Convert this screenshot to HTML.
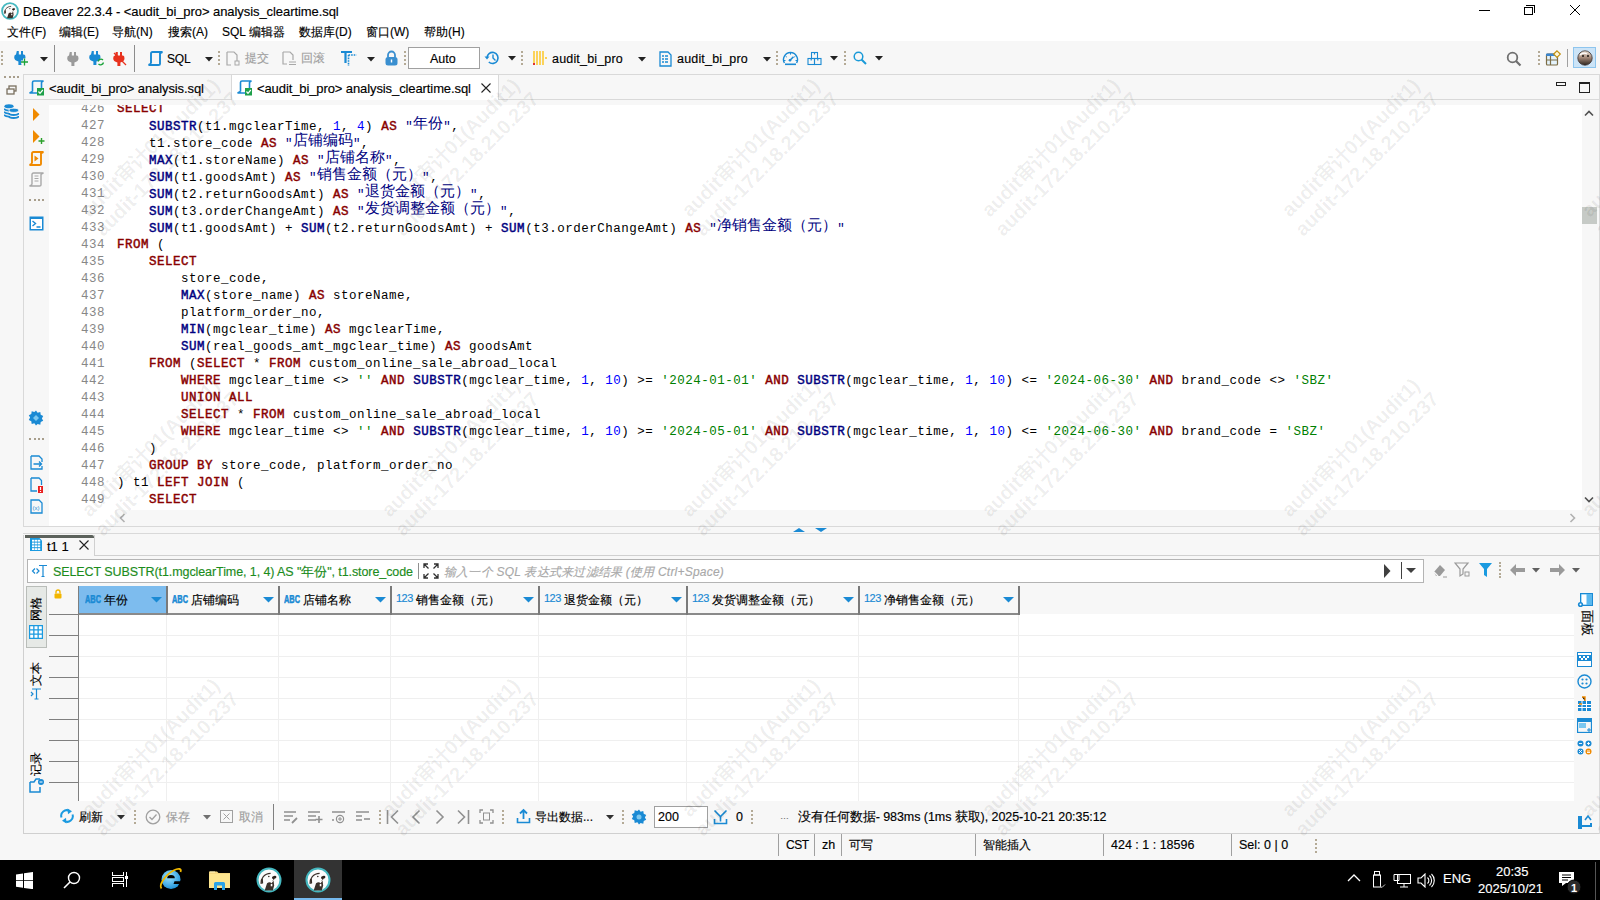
<!DOCTYPE html>
<html><head><meta charset="utf-8">
<style>
*{box-sizing:border-box;margin:0;padding:0}
html,body{width:1600px;height:900px;overflow:hidden;background:#f7f7f7;font-family:"Liberation Sans",sans-serif;font-size:12px;color:#000}
.a{position:absolute}
.t{position:absolute;white-space:nowrap;line-height:1;-webkit-text-stroke:0.15px currentColor}
#code{position:absolute;left:49px;top:105px;width:1533px;height:405px;background:#fff;overflow:hidden}
.ln{position:absolute;left:32px;width:24px;height:17px;line-height:18px;font-family:"Liberation Mono",monospace;font-size:12.5px;letter-spacing:0.5px;color:#878787;text-align:right;white-space:pre}
.cl{position:absolute;left:68px;height:17px;line-height:18px;font-family:"Liberation Mono",monospace;font-size:12.5px;letter-spacing:0.5px;color:#000;white-space:pre}
.k{color:#880000;font-weight:normal;-webkit-text-stroke:0.45px currentColor}
.f{color:#000080;font-weight:normal;-webkit-text-stroke:0.45px currentColor}
.n{color:#0000ff}
.s{color:#008000}
.q{color:#000080}
i.c{font-style:normal;display:inline-block;width:15px;font-size:14.5px;letter-spacing:0;position:relative;top:-2.5px}
.sep{position:absolute;width:1px;background:#8c8c8c}
.grip{position:absolute;width:2px;border-left:2px dotted #b4aa96}
.dd{position:absolute;width:0;height:0;border-left:5px solid transparent;border-right:5px solid transparent;border-top:5px solid #222}
.wm{position:absolute;width:300px;text-align:center;transform:rotate(-45deg);color:rgba(0,0,0,0.07);font-size:20px;font-weight:bold;line-height:23px;white-space:nowrap}
</style></head><body>
<!-- title bar -->
<div class="a" style="left:0;top:0;width:1600px;height:21px;background:#fff"></div>
<svg class="a" style="left:1px;top:2px" width="18" height="18" viewBox="0 0 24 24"><circle cx="12" cy="12" r="10.6" fill="#fbfbfb" stroke="#45b8c0" stroke-width="2.4"/><path d="M4.6 15.5C4.4 10.5 7.5 6 13.5 5.8" stroke="#3a302a" stroke-width="1.1" fill="none"/><path d="M4.8 11.5l1.5-1 .3 4.5-1.6.8z" fill="#3a302a"/><ellipse cx="16.8" cy="9.6" rx="2.1" ry="1.3" fill="#2a201a" transform="rotate(-15 16.8 9.6)"/><circle cx="11.8" cy="8.8" r=".75" fill="#3a302a"/><path d="M8 21.8L10.2 15q2.5-2 4.2 0l1.8-2.5.6 4.5-1.3 4.8z" fill="#3a302a"/><path d="M13.6 15.6h1.5v2.2h-1.5z" fill="#fff"/><path d="M15.5 12.5l1.3-1.5" stroke="#3a302a" stroke-width=".8"/></svg>
<div class="t" style="left:23px;top:5px;font-size:13px;letter-spacing:-0.07px">DBeaver 22.3.4 - &lt;audit_bi_pro&gt; analysis_cleartime.sql</div>
<div class="a" style="left:1479px;top:10px;width:11px;height:1px;background:#000"></div>
<div class="a" style="left:1524px;top:7px;width:9px;height:8px;border:1px solid #000"></div>
<div class="a" style="left:1526px;top:5px;width:9px;height:8px;border-top:1px solid #000;border-right:1px solid #000"></div>
<svg class="a" style="left:1570px;top:5px" width="10" height="10"><path d="M0 0L10 10M10 0L0 10" stroke="#000" stroke-width="1"/></svg>
<!-- menu -->
<div class="a" style="left:0;top:21px;width:1600px;height:20px;background:#fff"></div>
<div class="t" style="left:7px;top:26px">文件(F)</div>
<div class="t" style="left:59px;top:26px">编辑(E)</div>
<div class="t" style="left:112px;top:26px">导航(N)</div>
<div class="t" style="left:168px;top:26px">搜索(A)</div>
<div class="t" style="left:222px;top:26px">SQL 编辑器</div>
<div class="t" style="left:299px;top:26px">数据库(D)</div>
<div class="t" style="left:366px;top:26px">窗口(W)</div>
<div class="t" style="left:424px;top:26px">帮助(H)</div>
<!-- toolbar -->
<div class="a" style="left:0;top:41px;width:1600px;height:33px;background:#f7f7f7"></div>

<div class="grip" style="left:1px;top:51px;height:14px"></div>
<svg class="a" style="left:14px;top:51px" width="16" height="15" overflow="visible"><path d="M2.8 0h2v3.5h2.2V0h2v3.5h1Q11.5 3.5 11.5 6.3Q11.5 9.5 7.4 10.4V14H4.4V10.4Q0.2 9.5 0.2 6.3Q0.2 3.5 2 3.5z" fill="#1a8ad4"/><path d="M10.5 7.5v7M7 11h7" stroke="#f7f7f7" stroke-width="3"/><path d="M10.5 7.5v7M7 11h7" stroke="#1aa33a" stroke-width="1.3"/></svg>
<svg class="a" style="left:40px;top:57px" width="8" height="5"><path d="M0 0h8l-4 4.5z" fill="#222"/></svg>
<div class="sep" style="left:54px;top:45px;height:27px"></div>
<svg class="a" style="left:67px;top:52px" width="13" height="14"><path d="M2.8 0h2v3.5h2.2V0h2v3.5h1Q11.5 3.5 11.5 6.3Q11.5 9.5 7.4 10.4V14H4.4V10.4Q0.2 9.5 0.2 6.3Q0.2 3.5 2 3.5z" fill="#9a9a9a"/></svg>
<svg class="a" style="left:89px;top:51px" width="16" height="15"><path d="M2.8 0h2v3.5h2.2V0h2v3.5h1Q11.5 3.5 11.5 6.3Q11.5 9.5 7.4 10.4V14H4.4V10.4Q0.2 9.5 0.2 6.3Q0.2 3.5 2 3.5z" fill="#1a8ad4"/><path d="M9 10.5a3 3 0 0 1 5-1.5M14.5 11.5a3 3 0 0 1-5 1.5" stroke="#1aa33a" stroke-width="1.3" fill="none"/></svg>
<svg class="a" style="left:113px;top:52px" width="14" height="14"><path d="M2.8 0h2v3.5h2.2V0h2v3.5h1Q11.5 3.5 11.5 6.3Q11.5 9.5 7.4 10.4V14H4.4V10.4Q0.2 9.5 0.2 6.3Q0.2 3.5 2 3.5z" fill="#e8321e"/><path d="M1 1l12 12" stroke="#e8321e" stroke-width="1.3"/></svg>
<div class="sep" style="left:134px;top:45px;height:27px"></div>
<svg class="a" style="left:148px;top:51px" width="15" height="15"><path d="M3 12.5V2.5Q3 1 4.5 1H14.5Q13 1.5 12 2.5V13Q12 14 10.5 14H0.5Q2 13.5 3 12.5" stroke="#1a8ad4" stroke-width="1.9" fill="none"/></svg>
<div class="t" style="left:167px;top:53px;font-size:12px;letter-spacing:-0.2px">SQL</div>
<svg class="a" style="left:205px;top:57px" width="8" height="5"><path d="M0 0h8l-4 4.5z" fill="#222"/></svg>
<div class="grip" style="left:218px;top:51px;height:14px"></div>
<svg class="a" style="left:226px;top:51px" width="14" height="15"><path d="M1 1h7l3 3v6M5 14H1V1" stroke="#a8a8a8" stroke-width="1.2" fill="none"/><rect x="9" y="10" width="4" height="4" stroke="#a8a8a8" fill="none"/></svg>
<div class="t" style="left:245px;top:52px;font-size:12px;color:#a0a0a0">提交</div>
<svg class="a" style="left:282px;top:51px" width="15" height="15"><path d="M1 1h7l3 3v5M5 13H1V1" stroke="#a8a8a8" stroke-width="1.2" fill="none"/><path d="M7 11h7M7 13.5h7" stroke="#a8a8a8" stroke-width="1"/></svg>
<div class="t" style="left:301px;top:52px;font-size:12px;color:#a0a0a0">回滚</div>
<svg class="a" style="left:341px;top:51px" width="16" height="15"><path d="M0 1h11M4.5 1v11" stroke="#1a8ad4" stroke-width="2.2"/><path d="M7.5 4h8M7.5 4v11" stroke="#1a8ad4" stroke-width="1.6" stroke-dasharray="1.6 1"/></svg>
<svg class="a" style="left:367px;top:57px" width="8" height="5"><path d="M0 0h8l-4 4.5z" fill="#222"/></svg>
<svg class="a" style="left:385px;top:50px" width="13" height="16"><path d="M3 7.5V5a3.5 3.5 0 0 1 7 0v2.5" stroke="#3a8fd0" stroke-width="1.8" fill="none"/><rect x="0.5" y="7" width="12" height="8.5" rx="2.5" fill="#3a8fd0"/><rect x="5.8" y="9.5" width="1.4" height="3" fill="#fff"/></svg>
<div class="grip" style="left:404px;top:51px;height:14px"></div>
<div class="a" style="left:408px;top:47px;width:72px;height:22px;background:#fff;border:1px solid #a0a0a0"></div>
<div class="t" style="left:430px;top:53px;font-size:12.5px">Auto</div>
<svg class="a" style="left:484px;top:50px" width="17" height="16"><path d="M3 8a5.5 5.5 0 1 1 1.8 4" stroke="#1a8ad4" stroke-width="1.6" fill="none"/><path d="M0.5 6.5l2.5 3 2.5-3" fill="#1a8ad4"/><path d="M9 4.5v3.5l2.5 2.5" stroke="#1a8ad4" stroke-width="1.4" fill="none"/></svg>
<svg class="a" style="left:508px;top:56px" width="8" height="5"><path d="M0 0h8l-4 4.5z" fill="#222"/></svg>
<div class="grip" style="left:521px;top:51px;height:14px"></div>
<svg class="a" style="left:532px;top:51px" width="16" height="15"><path d="M2 0v14M5 0v14M8 0v14M11 0v14" stroke="#fcc419" stroke-width="1.4"/><circle cx="14" cy="7" r="1" fill="#fcc419"/><rect x="1" y="12" width="2" height="2" fill="#e03030"/></svg>
<div class="t" style="left:552px;top:53px;font-size:12.5px;letter-spacing:0.18px">audit_bi_pro</div>
<svg class="a" style="left:638px;top:57px" width="8" height="5"><path d="M0 0h8l-4 4.5z" fill="#222"/></svg>
<svg class="a" style="left:659px;top:51px" width="13" height="16"><path d="M1 1h8l3 3v11H1z" stroke="#1a8ad4" stroke-width="1.3" fill="none"/><path d="M3 5h2M6 5h3M3 8h2M6 8h3M3 11h2M6 11h3" stroke="#1a8ad4" stroke-width="1.4"/></svg>
<div class="t" style="left:677px;top:53px;font-size:12.5px;letter-spacing:0.18px">audit_bi_pro</div>
<svg class="a" style="left:763px;top:57px" width="8" height="5"><path d="M0 0h8l-4 4.5z" fill="#222"/></svg>
<div class="grip" style="left:776px;top:51px;height:14px"></div>
<svg class="a" style="left:782px;top:51px" width="18" height="15"><path d="M2.4 12A7 7 0 1 1 14.6 12" stroke="#1a8ad4" stroke-width="1.4" fill="none"/><path d="M3 13.3h11" stroke="#1a8ad4" stroke-width="1.6"/><path d="M8.5 2v1.6M3.6 5.2l1.2.9M13.4 5.2l-1.2.9M2 9.5h1.5M13.5 9.5H15" stroke="#1a8ad4" stroke-width="1"/><path d="M7.5 9.8l4-4" stroke="#1a8ad4" stroke-width="1.6"/><circle cx="8" cy="9.3" r="1.3" fill="#1a8ad4"/></svg>
<svg class="a" style="left:807px;top:51px" width="15" height="15"><rect x="4.5" y="1.5" width="6" height="6" stroke="#1a8ad4" fill="none" stroke-width="1.1"/><rect x="1" y="7.5" width="6.5" height="6" stroke="#1a8ad4" fill="none" stroke-width="1.1"/><rect x="7.5" y="7.5" width="6.5" height="6" stroke="#1a8ad4" fill="none" stroke-width="1.1"/><path d="M7.5 1.5v2M4.2 7.5v2M10.8 7.5v2" stroke="#1a8ad4" stroke-width="1.2"/></svg>
<svg class="a" style="left:830px;top:56px" width="8" height="5"><path d="M0 0h8l-4 4.5z" fill="#222"/></svg>
<div class="grip" style="left:844px;top:51px;height:14px"></div>
<svg class="a" style="left:852px;top:51px" width="15" height="15"><circle cx="6.5" cy="5.5" r="4.3" stroke="#1a9ad8" stroke-width="1.5" fill="none"/><path d="M9.5 8.5l4.5 4.5" stroke="#1a9ad8" stroke-width="2"/></svg>
<svg class="a" style="left:875px;top:56px" width="8" height="5"><path d="M0 0h8l-4 4.5z" fill="#222"/></svg>
<svg class="a" style="left:1506px;top:51px" width="16" height="16"><circle cx="6.5" cy="6.5" r="4.8" stroke="#707070" stroke-width="1.8" fill="none"/><path d="M10 10l4.5 4.5" stroke="#707070" stroke-width="2.2"/></svg>
<div class="grip" style="left:1538px;top:51px;height:14px"></div>
<svg class="a" style="left:1545px;top:50px" width="17" height="16"><rect x="1.5" y="4" width="11" height="11" rx="1" stroke="#7d6d45" stroke-width="1.2" fill="#e4f3fc"/><path d="M1.5 10h11M5.5 4v11" stroke="#7d6d45" stroke-width="1.2"/><rect x="1" y="3.5" width="12" height="2.5" rx="1" fill="#3a86d0"/><path d="M12 0.8l3.3 3.3-3.3 3.3-3.3-3.3z" fill="#fff8d8" stroke="#c09010" stroke-width="1.2"/></svg>
<div class="sep" style="left:1567px;top:49px;height:18px;background:#a0a0a0"></div>
<div class="a" style="left:1573px;top:47px;width:23px;height:21px;background:#cce4f7;border:1px solid #8ec5ee"></div>
<svg class="a" style="left:1577px;top:50px" width="16" height="16"><defs><linearGradient id="av" x1="0" y1="0" x2="0" y2="1"><stop offset="0" stop-color="#efe6da"/><stop offset=".45" stop-color="#a88e7e"/><stop offset="1" stop-color="#2e241e"/></linearGradient></defs><circle cx="8" cy="8" r="7.2" fill="url(#av)" stroke="#3a3030" stroke-width=".8"/><circle cx="6" cy="6" r="1" fill="#1a1410"/><circle cx="11" cy="6" r="1" fill="#1a1410"/><path d="M3 5c2-2 5-2 7-1" stroke="#fff" stroke-width="1.2" fill="none"/></svg>

<!-- tab bar -->
<div class="a" style="left:23px;top:74px;width:1577px;height:26px;background:#f7f7f7;border-top:1px solid #d9d9d9;border-left:1px solid #d9d9d9;border-bottom:1px solid #d9d9d9"></div>
<div class="a" style="left:231px;top:74px;width:268px;height:26px;background:#fff;border-left:1px solid #d9d9d9;border-right:1px solid #d9d9d9;border-top:1px solid #d9d9d9"></div>
<svg class="a" style="left:29px;top:80px" width="16" height="16"><path d="M3.5 11.5V2.5Q3.5 1 5 1H14.5Q13 1.5 12.5 2.5V12Q12.5 13 11 13H0.5Q2 12.5 3.5 11.5" stroke="#1a8ad4" stroke-width="1.6" fill="none"/><rect x="8" y="8" width="7" height="7.5" fill="#1ea04a"/><path d="M9.5 11.5l1.5 1.8 2.8-3.3" stroke="#fff" stroke-width="1.2" fill="none"/></svg>
<div class="t" style="left:49px;top:82px;font-size:13px;letter-spacing:-0.1px">&lt;audit_bi_pro&gt; analysis.sql</div>
<svg class="a" style="left:237px;top:80px" width="16" height="16"><path d="M3.5 11.5V2.5Q3.5 1 5 1H14.5Q13 1.5 12.5 2.5V12Q12.5 13 11 13H0.5Q2 12.5 3.5 11.5" stroke="#1a8ad4" stroke-width="1.6" fill="none"/><rect x="8" y="8" width="7" height="7.5" fill="#1ea04a"/><path d="M9.5 11.5l1.5 1.8 2.8-3.3" stroke="#fff" stroke-width="1.2" fill="none"/></svg>
<div class="t" style="left:257px;top:82px;font-size:13px;letter-spacing:-0.1px">&lt;audit_bi_pro&gt; analysis_cleartime.sql</div>
<div class="a" style="left:1556px;top:82px;width:10px;height:4px;border:1.5px solid #222"></div>
<div class="a" style="left:1579px;top:82px;width:11px;height:11px;border:1.3px solid #222;border-top-width:2.5px"></div>
<svg class="a" style="left:481px;top:83px" width="10" height="10"><path d="M0.5 0.5L9.5 9.5M9.5 0.5L0.5 9.5" stroke="#222" stroke-width="1.1"/></svg>
<!-- editor -->
<div class="a" style="left:23px;top:100px;width:1577px;height:427px;background:#f7f7f7;border-left:1px solid #d9d9d9"></div>
<div class="a" style="left:0;top:74px;width:23px;height:786px;background:#f7f7f7"></div>
<div class="a" style="left:4px;top:76px;width:15px;border-top:2px dotted #a89e8c"></div>
<svg class="a" style="left:6px;top:85px" width="11" height="10"><rect x="3" y="1" width="7" height="5" stroke="#7a7060" fill="none" stroke-width="1.3"/><rect x="1" y="4" width="7" height="5" stroke="#7a7060" fill="#f7f7f7" stroke-width="1.3"/></svg>
<svg class="a" style="left:4px;top:104px" width="15" height="15"><ellipse cx="5" cy="2.2" rx="4.6" ry="2" fill="#1a8ad4"/><path d="M0.4 4.6c0 1.1 2 2 4.6 2M0.4 7.6c0 1.1 2 2 4.6 2M0.4 10.6c0 1.1 2 2 4.6 2" stroke="#1a8ad4" stroke-width="1.8" fill="none"/><ellipse cx="9.8" cy="6.3" rx="4.8" ry="2.1" fill="#1a8ad4" stroke="#f7f7f7" stroke-width=".8"/><path d="M5 9c0 1.1 2.1 2 4.8 2s4.8-.9 4.8-2M5 12c0 1.1 2.1 2 4.8 2s4.8-.9 4.8-2" stroke="#1a8ad4" stroke-width="1.8" fill="none"/></svg>
<!-- editor gutter icons -->
<svg class="a" style="left:33px;top:108px" width="7" height="13"><path d="M0 0L6.5 6.5L0 13z" fill="#f08a00"/></svg>
<svg class="a" style="left:33px;top:130px" width="12" height="14"><path d="M0 0L6.5 6.5L0 13z" fill="#f08a00"/><path d="M8.5 8v6M5.5 11h6" stroke="#2aa02a" stroke-width="1.4"/></svg>
<svg class="a" style="left:29px;top:151px" width="15" height="15"><path d="M3 12.5V2.5Q3 1 4.5 1H14.5Q13 1.5 12 2.5V13Q12 14 10.5 14H0.5Q2 13.5 3 12.5" stroke="#f08a00" stroke-width="1.9" fill="none"/><path d="M5.5 4.5l4 3-4 3z" fill="#f08a00"/></svg>
<svg class="a" style="left:29px;top:172px" width="15" height="15"><path d="M3 12.5V2.5Q3 1 4.5 1H14.5Q13 1.5 12 2.5V13Q12 14 10.5 14H0.5Q2 13.5 3 12.5" stroke="#a8a8a8" stroke-width="1.4" fill="none"/><path d="M5.5 4h4M5.5 6.5h4M5.5 9h4" stroke="#a8a8a8" stroke-width="1"/></svg>
<div class="a" style="left:29px;top:199px;width:15px;border-top:2px dotted #a89e8c"></div>
<svg class="a" style="left:29px;top:216px" width="15" height="15"><rect x="0.5" y="0.5" width="14" height="14" fill="#1a8ad4"/><rect x="2" y="3" width="11" height="10" fill="#fff"/><path d="M3.5 5l3 2.5-3 2.5M7.5 11h4" stroke="#1a8ad4" stroke-width="1.4" fill="none"/></svg>
<svg class="a" style="left:28px;top:410px" width="16" height="16"><path d="M8 0.5l1.6 2.2 2.7-.6.4 2.7 2.5 1.2-1.3 2.4 1.3 2.4-2.5 1.2-.4 2.7-2.7-.6L8 15.5l-1.6-2.2-2.7.6-.4-2.7-2.5-1.2L2.1 7.6.8 5.2l2.5-1.2.4-2.7 2.7.6z" fill="#1a8ad4"/><path d="M8 5l3 3-3 3-3-3z" fill="#7cc8f0"/></svg>
<div class="a" style="left:29px;top:438px;width:15px;border-top:2px dotted #a89e8c"></div>
<svg class="a" style="left:30px;top:455px" width="13" height="15"><path d="M1 1h8l3 3v3M12 11v3H1V1" stroke="#1a8ad4" stroke-width="1.3" fill="none"/><path d="M3.5 9h8M9 6.5l2.5 2.5L9 11.5" stroke="#1a8ad4" stroke-width="1.3" fill="none"/></svg>
<svg class="a" style="left:30px;top:477px" width="13" height="16"><path d="M1 1h8l2.5 2.5V8M7 14H1V1" stroke="#1a8ad4" stroke-width="1.3" fill="none"/><rect x="8" y="9" width="5" height="7" fill="#e82020"/><path d="M10.5 10v3M10.5 14v1" stroke="#fff" stroke-width="1.2"/></svg>
<svg class="a" style="left:30px;top:499px" width="13" height="15"><path d="M1 1h8l3 3v10H1z" stroke="#1a8ad4" stroke-width="1.3" fill="none"/><text x="2.5" y="11" font-size="6" fill="#1a8ad4" font-family="Liberation Sans">(x)</text></svg>

<div id="code">
<div class="ln" style="top:-5px">426</div><div class="cl" style="top:-5px"><b class="k">SELECT</b></div>
<div class="ln" style="top:12px">427</div><div class="cl" style="top:12px">    <b class="f">SUBSTR</b>(t1.mgclearTime, <span class="n">1</span>, <span class="n">4</span>) <b class="k">AS</b> <span class="q">&quot;<i class="c">年</i><i class="c">份</i>&quot;</span>,</div>
<div class="ln" style="top:29px">428</div><div class="cl" style="top:29px">    t1.store_code <b class="k">AS</b> <span class="q">&quot;<i class="c">店</i><i class="c">铺</i><i class="c">编</i><i class="c">码</i>&quot;</span>,</div>
<div class="ln" style="top:46px">429</div><div class="cl" style="top:46px">    <b class="f">MAX</b>(t1.storeName) <b class="k">AS</b> <span class="q">&quot;<i class="c">店</i><i class="c">铺</i><i class="c">名</i><i class="c">称</i>&quot;</span>,</div>
<div class="ln" style="top:63px">430</div><div class="cl" style="top:63px">    <b class="f">SUM</b>(t1.goodsAmt) <b class="k">AS</b> <span class="q">&quot;<i class="c">销</i><i class="c">售</i><i class="c">金</i><i class="c">额</i><i class="c">（</i><i class="c">元</i><i class="c">）</i>&quot;</span>,</div>
<div class="ln" style="top:80px">431</div><div class="cl" style="top:80px">    <b class="f">SUM</b>(t2.returnGoodsAmt) <b class="k">AS</b> <span class="q">&quot;<i class="c">退</i><i class="c">货</i><i class="c">金</i><i class="c">额</i><i class="c">（</i><i class="c">元</i><i class="c">）</i>&quot;</span>,</div>
<div class="ln" style="top:97px">432</div><div class="cl" style="top:97px">    <b class="f">SUM</b>(t3.orderChangeAmt) <b class="k">AS</b> <span class="q">&quot;<i class="c">发</i><i class="c">货</i><i class="c">调</i><i class="c">整</i><i class="c">金</i><i class="c">额</i><i class="c">（</i><i class="c">元</i><i class="c">）</i>&quot;</span>,</div>
<div class="ln" style="top:114px">433</div><div class="cl" style="top:114px">    <b class="f">SUM</b>(t1.goodsAmt) + <b class="f">SUM</b>(t2.returnGoodsAmt) + <b class="f">SUM</b>(t3.orderChangeAmt) <b class="k">AS</b> <span class="q">&quot;<i class="c">净</i><i class="c">销</i><i class="c">售</i><i class="c">金</i><i class="c">额</i><i class="c">（</i><i class="c">元</i><i class="c">）</i>&quot;</span></div>
<div class="ln" style="top:131px">434</div><div class="cl" style="top:131px"><b class="k">FROM</b> (</div>
<div class="ln" style="top:148px">435</div><div class="cl" style="top:148px">    <b class="k">SELECT</b></div>
<div class="ln" style="top:165px">436</div><div class="cl" style="top:165px">        store_code,</div>
<div class="ln" style="top:182px">437</div><div class="cl" style="top:182px">        <b class="f">MAX</b>(store_name) <b class="k">AS</b> storeName,</div>
<div class="ln" style="top:199px">438</div><div class="cl" style="top:199px">        platform_order_no,</div>
<div class="ln" style="top:216px">439</div><div class="cl" style="top:216px">        <b class="f">MIN</b>(mgclear_time) <b class="k">AS</b> mgclearTime,</div>
<div class="ln" style="top:233px">440</div><div class="cl" style="top:233px">        <b class="f">SUM</b>(real_goods_amt_mgclear_time) <b class="k">AS</b> goodsAmt</div>
<div class="ln" style="top:250px">441</div><div class="cl" style="top:250px">    <b class="k">FROM</b> (<b class="k">SELECT</b> * <b class="k">FROM</b> custom_online_sale_abroad_local</div>
<div class="ln" style="top:267px">442</div><div class="cl" style="top:267px">        <b class="k">WHERE</b> mgclear_time &lt;&gt; <span class="s">&#x27;&#x27;</span> <b class="k">AND</b> <b class="f">SUBSTR</b>(mgclear_time, <span class="n">1</span>, <span class="n">10</span>) &gt;= <span class="s">&#x27;2024-01-01&#x27;</span> <b class="k">AND</b> <b class="f">SUBSTR</b>(mgclear_time, <span class="n">1</span>, <span class="n">10</span>) &lt;= <span class="s">&#x27;2024-06-30&#x27;</span> <b class="k">AND</b> brand_code &lt;&gt; <span class="s">&#x27;SBZ&#x27;</span></div>
<div class="ln" style="top:284px">443</div><div class="cl" style="top:284px">        <b class="k">UNION</b> <b class="k">ALL</b></div>
<div class="ln" style="top:301px">444</div><div class="cl" style="top:301px">        <b class="k">SELECT</b> * <b class="k">FROM</b> custom_online_sale_abroad_local</div>
<div class="ln" style="top:318px">445</div><div class="cl" style="top:318px">        <b class="k">WHERE</b> mgclear_time &lt;&gt; <span class="s">&#x27;&#x27;</span> <b class="k">AND</b> <b class="f">SUBSTR</b>(mgclear_time, <span class="n">1</span>, <span class="n">10</span>) &gt;= <span class="s">&#x27;2024-05-01&#x27;</span> <b class="k">AND</b> <b class="f">SUBSTR</b>(mgclear_time, <span class="n">1</span>, <span class="n">10</span>) &lt;= <span class="s">&#x27;2024-06-30&#x27;</span> <b class="k">AND</b> brand_code = <span class="s">&#x27;SBZ&#x27;</span></div>
<div class="ln" style="top:335px">446</div><div class="cl" style="top:335px">    )</div>
<div class="ln" style="top:352px">447</div><div class="cl" style="top:352px">    <b class="k">GROUP</b> <b class="k">BY</b> store_code, platform_order_no</div>
<div class="ln" style="top:369px">448</div><div class="cl" style="top:369px">) t1 <b class="k">LEFT</b> <b class="k">JOIN</b> (</div>
<div class="ln" style="top:386px">449</div><div class="cl" style="top:386px">    <b class="k">SELECT</b></div>

</div>
<!-- scrollbars -->
<div class="a" style="left:49px;top:510px;width:66px;height:16px;background:#fff"></div>
<div class="a" style="left:1582px;top:207px;width:15px;height:17px;background:#c6cac6"></div>
<!-- splitter / results -->
<div class="a" style="left:23px;top:526px;width:1577px;height:1px;background:#d9d9d9"></div>
<div class="a" style="left:23px;top:533px;width:1577px;height:1px;background:#d9d9d9"></div>
<!-- editor h scrollbar & v scrollbar arrows -->
<svg class="a" style="left:1584px;top:110px" width="10" height="7"><path d="M1 5.5l4-4 4 4" stroke="#505050" stroke-width="1.6" fill="none"/></svg>
<svg class="a" style="left:1584px;top:496px" width="10" height="7"><path d="M1 1.5l4 4 4-4" stroke="#505050" stroke-width="1.6" fill="none"/></svg>
<svg class="a" style="left:119px;top:513px" width="7" height="10"><path d="M5.5 1l-4 4 4 4" stroke="#b0b0b0" stroke-width="1.6" fill="none"/></svg>
<svg class="a" style="left:1569px;top:513px" width="7" height="10"><path d="M1.5 1l4 4-4 4" stroke="#b0b0b0" stroke-width="1.6" fill="none"/></svg>
<svg class="a" style="left:793px;top:527px" width="36" height="6"><path d="M0 5l6-4 6 4z" fill="#1a8ad4"/><path d="M22 1h12l-6 4z" fill="#1a8ad4"/></svg>
<!-- results tab -->
<div class="a" style="left:95px;top:555px;width:1504px;height:1px;background:#d0d0d0"></div>
<div class="a" style="left:24px;top:535px;width:71px;height:21px;background:#f7f7f7;border-right:1px solid #d0d0d0"></div>
<div class="a" style="left:25px;top:535px;width:69px;height:3px;background:#5c625c;border-top-right-radius:2px"></div>
<svg class="a" style="left:30px;top:538px" width="12" height="13"><path d="M0 0h9.5l2.5 2.5V13H0z" fill="#1a9ae0"/><rect x="2" y="1.8" width="2.4" height="1.8" fill="#fff"/><rect x="2" y="4.6" width="2.4" height="1.8" fill="#fff"/><rect x="2" y="7.4" width="2.4" height="1.8" fill="#fff"/><rect x="2" y="10.2" width="2.4" height="1.8" fill="#fff"/><rect x="4.9" y="1.8" width="2.4" height="1.8" fill="#fff"/><rect x="4.9" y="4.6" width="2.4" height="1.8" fill="#fff"/><rect x="4.9" y="7.4" width="2.4" height="1.8" fill="#fff"/><rect x="4.9" y="10.2" width="2.4" height="1.8" fill="#fff"/><rect x="7.8" y="1.8" width="2.4" height="1.8" fill="#fff"/><rect x="7.8" y="4.6" width="2.4" height="1.8" fill="#fff"/><rect x="7.8" y="7.4" width="2.4" height="1.8" fill="#fff"/><rect x="7.8" y="10.2" width="2.4" height="1.8" fill="#fff"/></svg>
<div class="t" style="left:47px;top:540px;font-size:13px">t1 1</div>
<svg class="a" style="left:79px;top:540px" width="10" height="10"><path d="M0.5 0.5L9.5 9.5M9.5 0.5L0.5 9.5" stroke="#222" stroke-width="1.1"/></svg>
<!-- filter -->
<div class="a" style="left:27px;top:559px;width:1397px;height:24px;background:#fff;border:1px solid #b4b4b4"></div>
<svg class="a" style="left:31px;top:564px" width="16" height="14"><path d="M4 4.5l-2.5 2.5 2.5 2.5M5.5 4.5l2.5 2.5-2.5 2.5" stroke="#1a8ad4" stroke-width="1.2" fill="none"/><path d="M8 1.5h8M12 1.5v11M10.5 12.5h3" stroke="#1a8ad4" stroke-width="1.2"/></svg>
<div class="t" style="left:53px;top:566px;font-size:12.5px;color:#1c8c1c;letter-spacing:-0.085px">SELECT SUBSTR(t1.mgclearTime, 1, 4) AS "年份", t1.store_code</div>
<div class="a" style="left:418px;top:563px;width:1px;height:16px;background:#909090"></div>
<svg class="a" style="left:423px;top:563px" width="16" height="16"><path d="M1 5V1h4M11 1h4v4M15 11v4h-4M5 15H1v-4M1 1l4.5 4.5M15 1l-4.5 4.5M15 15l-4.5-4.5M1 15l4.5-4.5" stroke="#303030" stroke-width="1.3" fill="none"/></svg>
<div class="t" style="left:444px;top:566px;font-size:12px;color:#a8a8a8;font-style:italic;letter-spacing:0.22px">输入一个 SQL 表达式来过滤结果 (使用 Ctrl+Space)</div>
<svg class="a" style="left:1383px;top:564px" width="8" height="14"><path d="M1 0l6.5 7L1 14z" fill="#404040"/></svg>
<div class="a" style="left:1401px;top:562px;width:1px;height:17px;background:#404040"></div>
<svg class="a" style="left:1406px;top:568px" width="10" height="6"><path d="M0 0h10l-5 5z" fill="#404040"/></svg>
<svg class="a" style="left:1432px;top:562px" width="16" height="16"><path d="M2 10l6-7 5 5-5 6H4z" fill="#9a9a9a"/><path d="M2 10l4 4" stroke="#f7f7f7" stroke-width="1.2"/><path d="M11 15h4" stroke="#9a9a9a"/></svg>
<svg class="a" style="left:1454px;top:562px" width="16" height="16"><path d="M1 1h13l-5 6v5l-3 2V7z" stroke="#9a9a9a" stroke-width="1.2" fill="none"/><rect x="11" y="10" width="4" height="4" stroke="#9a9a9a" fill="none"/></svg>
<svg class="a" style="left:1478px;top:562px" width="15" height="16"><path d="M1 1h13l-5 6v8l-3-2V7z" fill="#1a9ae0"/></svg>
<div class="grip" style="left:1499px;top:562px;height:16px"></div>
<svg class="a" style="left:1509px;top:564px" width="17" height="12"><path d="M7 0L1 6l6 6V8h9V4H7z" fill="#9a9a9a"/></svg>
<svg class="a" style="left:1532px;top:568px" width="8" height="5"><path d="M0 0h8l-4 4.5z" fill="#606060"/></svg>
<svg class="a" style="left:1549px;top:564px" width="17" height="12"><path d="M10 0l6 6-6 6V8H1V4h9z" fill="#9a9a9a"/></svg>
<svg class="a" style="left:1572px;top:568px" width="8" height="5"><path d="M0 0h8l-4 4.5z" fill="#606060"/></svg>
<!-- results left vertical tabs -->
<div class="a" style="left:23px;top:535px;width:1px;height:299px;background:#d0d0d0"></div>
<div class="a" style="left:26px;top:586px;width:21px;height:62px;background:#e6e9e6;border:1px solid #b9bdb9"></div>
<div class="t" style="left:28px;top:603px;width:20px;font-size:12px;transform:rotate(-90deg);transform-origin:10px 8px">网格</div>
<svg class="a" style="left:29px;top:625px" width="14" height="14"><rect x="0" y="0" width="14" height="14" fill="#1a9ae0"/><path d="M1.2 1.2h3v3h-3zM5.5 1.2h3v3h-3zM9.8 1.2h3v3h-3zM1.2 5.5h3v3h-3zM5.5 5.5h3v3h-3zM9.8 5.5h3v3h-3zM1.2 9.8h3v3h-3zM5.5 9.8h3v3h-3zM9.8 9.8h3v3h-3z" fill="#fff"/></svg>
<div class="t" style="left:28px;top:668px;width:20px;font-size:12px;transform:rotate(-90deg);transform-origin:10px 8px">文本</div>
<svg class="a" style="left:30px;top:687px" width="12" height="14"><path d="M2 2h9M6.5 2v10M4.5 12h4" stroke="#1a8ad4" stroke-width="1.2"/><path d="M1 5l2 2-2 2" stroke="#1a8ad4" stroke-width="1.2" fill="none"/></svg>
<div class="t" style="left:28px;top:758px;width:20px;font-size:12px;transform:rotate(-90deg);transform-origin:10px 8px">记录</div>
<svg class="a" style="left:29px;top:777px" width="15" height="16"><path d="M1 5h4l2-3h4M11 10v5H1V5" stroke="#1a8ad4" stroke-width="1.5" fill="none"/><circle cx="12" cy="5" r="3" fill="#1a8ad4"/><path d="M10.5 5h3" stroke="#fff"/></svg>
<!-- grid -->
<div class="a" style="left:49px;top:586px;width:1525px;height:215px;background:#fff"></div>
<div class="a" style="left:49px;top:586px;width:30px;height:215px;background:#f7f7f7"></div>
<div class="a" style="left:79px;top:586px;width:1495px;height:28px;background:#f7f7f7"></div>
<svg class="a" style="left:54px;top:589px" width="8" height="10"><path d="M2 4.5V3a2 2 0 0 1 4 0v1.5" stroke="#f2b600" stroke-width="1.4" fill="none"/><rect x="0.5" y="4.5" width="7" height="5" rx="1" fill="#f2b600"/></svg>
<div class="a" style="left:79px;top:586px;width:88px;height:28px;background:#7dbcee"></div>
<div class="a" style="left:78px;top:586px;width:1px;height:215px;background:#7f7f7f"></div>
<div class="a" style="left:79px;top:613px;width:940px;height:2px;background:#8a8a8a"></div><div class="a" style="left:49px;top:614px;width:29px;height:1px;background:#7f7f7f"></div>
<div class="a" style="left:166px;top:586px;width:2px;height:29px;background:#7a7a7a"></div><div class="a" style="left:166px;top:615px;width:1px;height:186px;background:#efefef"></div><svg class="a" style="left:85px;top:595px" width="17" height="9"><text x="0" y="8" font-family="Liberation Sans" font-size="10" font-weight="bold" fill="#1a8ad4" stroke="#1a8ad4" stroke-width="0.5" textLength="16" lengthAdjust="spacingAndGlyphs">ABC</text></svg><div class="t" style="left:104px;top:594px;font-size:12px">年份</div><svg class="a" style="left:151px;top:597px" width="11" height="6"><path d="M0 0h11l-5.5 5.5z" fill="#1a8ad4"/></svg><div class="a" style="left:278px;top:586px;width:2px;height:29px;background:#7a7a7a"></div><div class="a" style="left:278px;top:615px;width:1px;height:186px;background:#efefef"></div><svg class="a" style="left:172px;top:595px" width="17" height="9"><text x="0" y="8" font-family="Liberation Sans" font-size="10" font-weight="bold" fill="#1a8ad4" stroke="#1a8ad4" stroke-width="0.5" textLength="16" lengthAdjust="spacingAndGlyphs">ABC</text></svg><div class="t" style="left:191px;top:594px;font-size:12px">店铺编码</div><svg class="a" style="left:263px;top:597px" width="11" height="6"><path d="M0 0h11l-5.5 5.5z" fill="#1a8ad4"/></svg><div class="a" style="left:390px;top:586px;width:2px;height:29px;background:#7a7a7a"></div><div class="a" style="left:390px;top:615px;width:1px;height:186px;background:#efefef"></div><svg class="a" style="left:284px;top:595px" width="17" height="9"><text x="0" y="8" font-family="Liberation Sans" font-size="10" font-weight="bold" fill="#1a8ad4" stroke="#1a8ad4" stroke-width="0.5" textLength="16" lengthAdjust="spacingAndGlyphs">ABC</text></svg><div class="t" style="left:303px;top:594px;font-size:12px">店铺名称</div><svg class="a" style="left:375px;top:597px" width="11" height="6"><path d="M0 0h11l-5.5 5.5z" fill="#1a8ad4"/></svg><div class="a" style="left:538px;top:586px;width:2px;height:29px;background:#7a7a7a"></div><div class="a" style="left:538px;top:615px;width:1px;height:186px;background:#efefef"></div><div class="t" style="left:396px;top:593px;font-size:11px;color:#1a8ad4;letter-spacing:-0.5px">123</div><div class="t" style="left:416px;top:594px;font-size:12px">销售金额（元）</div><svg class="a" style="left:523px;top:597px" width="11" height="6"><path d="M0 0h11l-5.5 5.5z" fill="#1a8ad4"/></svg><div class="a" style="left:686px;top:586px;width:2px;height:29px;background:#7a7a7a"></div><div class="a" style="left:686px;top:615px;width:1px;height:186px;background:#efefef"></div><div class="t" style="left:544px;top:593px;font-size:11px;color:#1a8ad4;letter-spacing:-0.5px">123</div><div class="t" style="left:564px;top:594px;font-size:12px">退货金额（元）</div><svg class="a" style="left:671px;top:597px" width="11" height="6"><path d="M0 0h11l-5.5 5.5z" fill="#1a8ad4"/></svg><div class="a" style="left:858px;top:586px;width:2px;height:29px;background:#7a7a7a"></div><div class="a" style="left:858px;top:615px;width:1px;height:186px;background:#efefef"></div><div class="t" style="left:692px;top:593px;font-size:11px;color:#1a8ad4;letter-spacing:-0.5px">123</div><div class="t" style="left:712px;top:594px;font-size:12px">发货调整金额（元）</div><svg class="a" style="left:843px;top:597px" width="11" height="6"><path d="M0 0h11l-5.5 5.5z" fill="#1a8ad4"/></svg><div class="a" style="left:1018px;top:586px;width:2px;height:29px;background:#7a7a7a"></div><div class="a" style="left:1018px;top:615px;width:1px;height:186px;background:#efefef"></div><div class="t" style="left:864px;top:593px;font-size:11px;color:#1a8ad4;letter-spacing:-0.5px">123</div><div class="t" style="left:884px;top:594px;font-size:12px">净销售金额（元）</div><svg class="a" style="left:1003px;top:597px" width="11" height="6"><path d="M0 0h11l-5.5 5.5z" fill="#1a8ad4"/></svg><div class="a" style="left:49px;top:635px;width:29px;height:1px;background:#7f7f7f"></div><div class="a" style="left:79px;top:635px;width:1495px;height:1px;background:#efefef"></div><div class="a" style="left:49px;top:656px;width:29px;height:1px;background:#7f7f7f"></div><div class="a" style="left:79px;top:656px;width:1495px;height:1px;background:#efefef"></div><div class="a" style="left:49px;top:677px;width:29px;height:1px;background:#7f7f7f"></div><div class="a" style="left:79px;top:677px;width:1495px;height:1px;background:#efefef"></div><div class="a" style="left:49px;top:698px;width:29px;height:1px;background:#7f7f7f"></div><div class="a" style="left:79px;top:698px;width:1495px;height:1px;background:#efefef"></div><div class="a" style="left:49px;top:719px;width:29px;height:1px;background:#7f7f7f"></div><div class="a" style="left:79px;top:719px;width:1495px;height:1px;background:#efefef"></div><div class="a" style="left:49px;top:740px;width:29px;height:1px;background:#7f7f7f"></div><div class="a" style="left:79px;top:740px;width:1495px;height:1px;background:#efefef"></div><div class="a" style="left:49px;top:761px;width:29px;height:1px;background:#7f7f7f"></div><div class="a" style="left:79px;top:761px;width:1495px;height:1px;background:#efefef"></div><div class="a" style="left:49px;top:782px;width:29px;height:1px;background:#7f7f7f"></div><div class="a" style="left:79px;top:782px;width:1495px;height:1px;background:#efefef"></div>

<!-- status bar -->
<!-- results bottom toolbar -->
<svg class="a" style="left:59px;top:808px" width="16" height="16"><path d="M2.5 9.5A5.5 5.5 0 0 1 10.5 3" stroke="#1a9ae0" stroke-width="2" fill="none"/><path d="M8.5 0.5l4.5 2.8-4 3z" fill="#1a9ae0"/><path d="M13.5 6.5A5.5 5.5 0 0 1 5.5 13" stroke="#1a9ae0" stroke-width="2" fill="none"/><path d="M7.5 15.5L3 12.7l4-3z" fill="#1a9ae0"/></svg>
<div class="t" style="left:79px;top:811px;font-size:12px">刷新</div>
<svg class="a" style="left:117px;top:815px" width="8" height="5"><path d="M0 0h8l-4 4.5z" fill="#303030"/></svg>
<div class="grip" style="left:134px;top:810px;height:14px"></div>
<svg class="a" style="left:145px;top:809px" width="16" height="16"><circle cx="8" cy="8" r="6.8" stroke="#a0a0a0" stroke-width="1.3" fill="none"/><path d="M4.5 8l2.5 2.5 4.5-5" stroke="#a0a0a0" stroke-width="1.3" fill="none"/></svg>
<div class="t" style="left:166px;top:811px;font-size:12px;color:#a0a0a0">保存</div>
<svg class="a" style="left:203px;top:815px" width="8" height="5"><path d="M0 0h8l-4 4.5z" fill="#707070"/></svg>
<svg class="a" style="left:220px;top:810px" width="14" height="14"><rect x="0.5" y="0.5" width="12" height="12" stroke="#a0a0a0" fill="none"/><path d="M3.5 3.5l6 6M9.5 3.5l-6 6" stroke="#a0a0a0"/></svg>
<div class="t" style="left:239px;top:811px;font-size:12px;color:#a0a0a0">取消</div>
<div class="sep" style="left:273px;top:804px;height:26px;background:#808080"></div>
<svg class="a" style="left:283px;top:810px" width="16" height="14"><path d="M1 2h12M1 6h9M1 10h6" stroke="#909090" stroke-width="1.6"/><path d="M9 13l5-5" stroke="#909090" stroke-width="1.8"/></svg>
<svg class="a" style="left:307px;top:810px" width="16" height="14"><path d="M1 2h12M1 6h8M1 10h8" stroke="#909090" stroke-width="1.6"/><path d="M12 6v7M8.5 9.5h7" stroke="#909090" stroke-width="1.6"/></svg>
<svg class="a" style="left:331px;top:810px" width="16" height="14"><path d="M1 2h13M1 10h2" stroke="#909090" stroke-width="1.6"/><circle cx="9" cy="9" r="3.6" stroke="#909090" stroke-width="1.2" fill="none"/><path d="M9 7v4M7 9h4" stroke="#909090"/></svg>
<svg class="a" style="left:355px;top:810px" width="16" height="14"><path d="M1 2h13M1 6h6M1 10h6" stroke="#909090" stroke-width="1.6"/><path d="M9 9h6" stroke="#909090" stroke-width="1.6"/></svg>
<div class="grip" style="left:379px;top:810px;height:14px"></div>
<svg class="a" style="left:386px;top:809px" width="14" height="16"><path d="M1.5 1v14" stroke="#909090" stroke-width="1.6"/><path d="M12 1.5L5.5 8l6.5 6.5" stroke="#909090" stroke-width="1.6" fill="none"/></svg>
<svg class="a" style="left:411px;top:809px" width="10" height="16"><path d="M8.5 1.5L2 8l6.5 6.5" stroke="#909090" stroke-width="1.6" fill="none"/></svg>
<svg class="a" style="left:435px;top:809px" width="10" height="16"><path d="M1.5 1.5L8 8l-6.5 6.5" stroke="#909090" stroke-width="1.6" fill="none"/></svg>
<svg class="a" style="left:456px;top:809px" width="14" height="16"><path d="M12.5 1v14" stroke="#909090" stroke-width="1.6"/><path d="M2 1.5L8.5 8 2 14.5" stroke="#909090" stroke-width="1.6" fill="none"/></svg>
<svg class="a" style="left:479px;top:809px" width="15" height="15"><path d="M1 4V1h3M11 1h3v3M14 11v3h-3M4 14H1v-3" stroke="#909090" stroke-width="1.3" fill="none"/><rect x="4.5" y="4" width="6" height="7" stroke="#909090" fill="none"/></svg>
<div class="grip" style="left:502px;top:810px;height:14px"></div>
<svg class="a" style="left:516px;top:808px" width="15" height="16"><path d="M7.5 2v9M4 5.5l3.5-3.5 3.5 3.5" stroke="#1a8ad4" stroke-width="1.8" fill="none"/><path d="M1.5 10v4.5h12V10" stroke="#1a8ad4" stroke-width="1.6" fill="none"/></svg>
<div class="t" style="left:535px;top:811px;font-size:12px">导出数据...</div>
<svg class="a" style="left:606px;top:815px" width="8" height="5"><path d="M0 0h8l-4 4.5z" fill="#303030"/></svg>
<div class="grip" style="left:622px;top:810px;height:14px"></div>
<svg class="a" style="left:631px;top:809px" width="16" height="16"><path d="M8 0.5l1.6 2.2 2.7-.6.4 2.7 2.5 1.2-1.3 2.4 1.3 2.4-2.5 1.2-.4 2.7-2.7-.6L8 15.5l-1.6-2.2-2.7.6-.4-2.7-2.5-1.2L2.1 7.6.8 5.2l2.5-1.2.4-2.7 2.7.6z" fill="#1a8ad4"/><circle cx="8" cy="8" r="2.5" fill="#7cc8f0"/></svg>
<div class="a" style="left:654px;top:806px;width:54px;height:22px;background:#fff;border:1px solid #a0a0a0"></div>
<div class="t" style="left:658px;top:811px;font-size:12.5px">200</div>
<svg class="a" style="left:713px;top:809px" width="16" height="16"><path d="M1.5 1.5l6 6 6-6M7.5 7.5v5" stroke="#1a8ad4" stroke-width="1.6" fill="none"/><path d="M1.5 10v4.5h12V10" stroke="#1a8ad4" stroke-width="1.6" fill="none"/></svg>
<div class="t" style="left:736px;top:811px;font-size:12.5px">0</div>
<div class="grip" style="left:751px;top:810px;height:14px"></div>
<div class="t" style="left:780px;top:812px;font-size:9px;color:#707070">…</div>
<div class="t" style="left:798px;top:811px;font-size:12.5px;letter-spacing:-0.06px">没有任何数据- 983ms (1ms 获取), 2025-10-21 20:35:12</div>
<!-- right side strip of results -->
<svg class="a" style="left:1577px;top:593px" width="16" height="16"><rect x="3.5" y="0.5" width="12" height="12" stroke="#1a8ad4" fill="#5ab8ee"/><rect x="4.5" y="1.5" width="5" height="10" fill="#fff"/><path d="M3.5 9.5l2 2-2 2-2-2z" fill="#1a8ad4"/><circle cx="3.5" cy="11.5" r="2.6" fill="#1a8ad4"/><circle cx="3.5" cy="11.5" r="1" fill="#fff"/></svg>
<div class="t" style="left:1577px;top:610px;width:16px;font-size:12.5px;transform:rotate(90deg);transform-origin:8px 8px">面板</div>
<svg class="a" style="left:1577px;top:652px" width="15" height="15"><rect x="0.5" y="0.5" width="14" height="14" stroke="#1a8ad4" fill="#fff"/><path d="M1 3h13v6H1z" fill="#1a8ad4"/><path d="M2 4h2v2H2zM6 4h2v2H6zM10 4h2v2h-2zM4 6h2v2H4zM8 6h2v2H8z" fill="#fff"/></svg>
<svg class="a" style="left:1577px;top:674px" width="15" height="15"><circle cx="7.5" cy="7.5" r="6.5" stroke="#1a8ad4" stroke-width="1.4" fill="none"/><circle cx="5.5" cy="5.5" r="1.1" fill="#1a8ad4"/><circle cx="9.5" cy="5.5" r="1.1" fill="#1a8ad4"/><circle cx="5.5" cy="9.5" r="1.1" fill="#1a8ad4"/><circle cx="9.5" cy="9.5" r="1.1" fill="#1a8ad4"/></svg>
<svg class="a" style="left:1577px;top:696px" width="15" height="16"><rect x="1" y="5" width="13" height="10" fill="#1a8ad4"/><path d="M1 8.5h13M1 11.5h13M5 5v10M9.5 5v10" stroke="#fff" stroke-width="1"/><path d="M5 1h3v4M2 8h3" stroke="#f08a00" stroke-width="1.4"/></svg>
<svg class="a" style="left:1577px;top:718px" width="15" height="15"><rect x="0.5" y="0.5" width="14" height="14" stroke="#1a8ad4" fill="none" stroke-width="1.3"/><rect x="1" y="1" width="13" height="3" fill="#1a8ad4"/><rect x="2" y="5" width="7" height="5" fill="#7cc8f0"/><path d="M10 12h4M12 10v4" stroke="#1a8ad4"/></svg>
<svg class="a" style="left:1577px;top:740px" width="15" height="15"><circle cx="3.5" cy="3.5" r="3" fill="#1a8ad4"/><circle cx="11.5" cy="3.5" r="3" fill="#1a8ad4"/><circle cx="3.5" cy="11.5" r="3" fill="#1a8ad4"/><circle cx="11.5" cy="11.5" r="3" fill="#f08a00"/><path d="M2 3.5h3M10 3.5h3M11.5 2v3M2 10l3 3M5 10l-3 3M10 11h3M10 12.5h3" stroke="#fff" stroke-width=".9"/></svg>
<svg class="a" style="left:1577px;top:814px" width="16" height="16"><rect x="1" y="2" width="4" height="13" fill="#1a8ad4"/><path d="M5 12h9V9" stroke="#1a8ad4" stroke-width="2" fill="none"/><path d="M8 6l3-4 3 4" stroke="#1a8ad4" stroke-width="1.6" fill="none"/></svg>
<div class="a" style="left:23px;top:833px;width:1577px;height:1px;background:#d0d0d0"></div>
<!-- status bar -->
<div class="sep" style="left:778px;top:834px;height:22px;background:#a0a0a0"></div>
<div class="t" style="left:786px;top:839px;font-size:12px;letter-spacing:-0.5px">CST</div>
<div class="sep" style="left:814px;top:834px;height:22px;background:#a0a0a0"></div>
<div class="t" style="left:822px;top:839px;font-size:12.5px">zh</div>
<div class="sep" style="left:841px;top:834px;height:22px;background:#a0a0a0"></div>
<div class="t" style="left:849px;top:839px;font-size:12px">可写</div>
<div class="sep" style="left:975px;top:834px;height:22px;background:#a0a0a0"></div>
<div class="t" style="left:983px;top:839px;font-size:12px">智能插入</div>
<div class="sep" style="left:1103px;top:834px;height:22px;background:#a0a0a0"></div>
<div class="t" style="left:1111px;top:839px;font-size:12.5px">424 : 1 : 18596</div>
<div class="sep" style="left:1231px;top:834px;height:22px;background:#a0a0a0"></div>
<div class="t" style="left:1239px;top:839px;font-size:12.5px">Sel: 0 | 0</div>
<div class="grip" style="left:1315px;top:839px;height:14px"></div>


<!-- taskbar -->
<div class="a" style="left:0;top:860px;width:1600px;height:40px;background:#000"></div>
<svg class="a" style="left:16px;top:872px" width="17" height="17"><path d="M0 2.4l7-1v6.8H0zM8 1.3l9-1.3v8.2H8zM0 9h7v6.8l-7-1zM8 9h9v8.2l-9-1.3z" fill="#fff"/></svg>
<svg class="a" style="left:63px;top:871px" width="18" height="18"><circle cx="11" cy="7" r="5.5" stroke="#fff" stroke-width="1.4" fill="none"/><path d="M7 11l-6 6" stroke="#fff" stroke-width="1.6"/></svg>
<svg class="a" style="left:111px;top:871px" width="19" height="17" shape-rendering="crispEdges"><path d="M1.5 1v3.5h11V1M1.5 16v-3.5h11V16" stroke="#fff" stroke-width="1" fill="none"/><rect x="1.5" y="6.5" width="11" height="4" stroke="#fff" stroke-width="1" fill="none"/><path d="M15.5 1v15" stroke="#fff" stroke-width="1"/><rect x="14" y="5" width="3" height="3" fill="#fff"/></svg>
<svg class="a" style="left:158px;top:866px" width="26" height="26"><defs><radialGradient id="ieg" cx=".4" cy=".35" r=".7"><stop offset="0" stop-color="#9fe4ff"/><stop offset="1" stop-color="#1a90d8"/></radialGradient></defs><circle cx="13" cy="13.5" r="9.5" fill="url(#ieg)"/><path d="M9.2 12.2a3.8 3.3 0 0 1 7.6 0z" fill="#000"/><path d="M16.5 15.2H23V18h-7.5z" fill="#000"/><path d="M3.5 22.5C0.5 19.5 7 9 15.5 4.5c5-2.5 8.5-2 7 1.5" stroke="#f0b800" stroke-width="1.8" fill="none"/></svg>
<svg class="a" style="left:208px;top:870px" width="24" height="21"><path d="M1 1.5h8l1.5 1.5H22v15H1z" fill="#f5d780"/><path d="M1 4h21v14H1z" fill="#fde58f"/><path d="M2 2h5" stroke="#fff6c0" stroke-width="1"/><path d="M6 20v-6.5q0-1.5 1.5-1.5h8q1.5 0 1.5 1.5V20h-3v-4.5h-5V20z" fill="#2aa3e8"/></svg>
<div class="a" style="left:294px;top:860px;width:48px;height:40px;background:#333"></div><div class="a" style="left:294px;top:898px;width:48px;height:2px;background:#76b9ed"></div><svg class="a" style="left:256px;top:867px" width="26" height="26" viewBox="0 0 24 24"><circle cx="12" cy="12" r="10.6" fill="#fbfbfb" stroke="#45b8c0" stroke-width="1.9"/><path d="M4.6 15.5C4.4 10.5 7.5 6 13.5 5.8" stroke="#3a302a" stroke-width="1.1" fill="none"/><path d="M4.8 11.5l1.5-1 .3 4.5-1.6.8z" fill="#3a302a"/><ellipse cx="16.8" cy="9.6" rx="2.1" ry="1.3" fill="#2a201a" transform="rotate(-15 16.8 9.6)"/><circle cx="11.8" cy="8.8" r=".75" fill="#3a302a"/><path d="M8 21.8L10.2 15q2.5-2 4.2 0l1.8-2.5.6 4.5-1.3 4.8z" fill="#3a302a"/><path d="M13.6 15.6h1.5v2.2h-1.5z" fill="#fff"/><path d="M15.5 12.5l1.3-1.5" stroke="#3a302a" stroke-width=".8"/></svg><svg class="a" style="left:305px;top:867px" width="26" height="26" viewBox="0 0 24 24"><circle cx="12" cy="12" r="10.6" fill="#fbfbfb" stroke="#45b8c0" stroke-width="1.9"/><path d="M4.6 15.5C4.4 10.5 7.5 6 13.5 5.8" stroke="#3a302a" stroke-width="1.1" fill="none"/><path d="M4.8 11.5l1.5-1 .3 4.5-1.6.8z" fill="#3a302a"/><ellipse cx="16.8" cy="9.6" rx="2.1" ry="1.3" fill="#2a201a" transform="rotate(-15 16.8 9.6)"/><circle cx="11.8" cy="8.8" r=".75" fill="#3a302a"/><path d="M8 21.8L10.2 15q2.5-2 4.2 0l1.8-2.5.6 4.5-1.3 4.8z" fill="#3a302a"/><path d="M13.6 15.6h1.5v2.2h-1.5z" fill="#fff"/><path d="M15.5 12.5l1.3-1.5" stroke="#3a302a" stroke-width=".8"/></svg><svg class="a" style="left:1347px;top:874px" width="14" height="8"><path d="M1 7l6-6 6 6" stroke="#fff" stroke-width="1.3" fill="none"/></svg>
<svg class="a" style="left:1372px;top:871px" width="14" height="17"><rect x="1.5" y="4" width="7" height="12" stroke="#fff" fill="none"/><rect x="2.5" y="0.5" width="5" height="3.5" stroke="#fff" fill="none"/><path d="M8 15l2 1.5 3-3" stroke="#ccc" fill="none"/></svg>
<svg class="a" style="left:1393px;top:873px" width="18" height="15"><rect x="4.5" y="1.5" width="13" height="9" stroke="#fff" fill="none"/><path d="M11 11v3M7 14h8M1 1.5h5v6H1z" stroke="#fff" fill="none"/></svg>
<svg class="a" style="left:1417px;top:873px" width="18" height="15"><path d="M1 5h3l4-4v13l-4-4H1z" stroke="#fff" stroke-width="1.1" fill="none"/><path d="M10.5 4.5a4 4 0 0 1 0 6M12.5 2.5a7 7 0 0 1 0 10M14.5 1a9 9 0 0 1 0 13" stroke="#fff" stroke-width="1.1" fill="none"/></svg>
<div class="t" style="left:1443px;top:872px;font-size:13px;color:#fff">ENG</div>
<div class="t" style="left:1496px;top:865px;font-size:13px;color:#fff">20:35</div>
<div class="t" style="left:1478px;top:882px;font-size:13px;color:#fff">2025/10/21</div>
<svg class="a" style="left:1558px;top:871px" width="26" height="26"><path d="M1 1h15v11H8l-4 3v-3H1z" fill="#fff"/><path d="M4 4h9M4 6.5h9M4 9h6" stroke="#000" stroke-width="1"/><circle cx="16" cy="16" r="7" fill="#2b2b2b" stroke="#000"/><text x="13" y="20.5" font-size="11" font-weight="bold" fill="#fff" font-family="Liberation Sans">1</text></svg>
<div class="a" style="left:1595px;top:862px;width:1px;height:38px;background:#555"></div>

<div class="a" style="left:1599px;top:74px;width:1px;height:760px;background:#dadada"></div>
<div class="wm" style="left:9px;top:133px">audit审计01(Audit1)<br>audit-172.18.210.237</div><div class="wm" style="left:309px;top:133px">audit审计01(Audit1)<br>audit-172.18.210.237</div><div class="wm" style="left:609px;top:133px">audit审计01(Audit1)<br>audit-172.18.210.237</div><div class="wm" style="left:909px;top:133px">audit审计01(Audit1)<br>audit-172.18.210.237</div><div class="wm" style="left:1209px;top:133px">audit审计01(Audit1)<br>audit-172.18.210.237</div><div class="wm" style="left:1509px;top:133px">audit审计01(Audit1)<br>audit-172.18.210.237</div><div class="wm" style="left:9px;top:433px">audit审计01(Audit1)<br>audit-172.18.210.237</div><div class="wm" style="left:309px;top:433px">audit审计01(Audit1)<br>audit-172.18.210.237</div><div class="wm" style="left:609px;top:433px">audit审计01(Audit1)<br>audit-172.18.210.237</div><div class="wm" style="left:909px;top:433px">audit审计01(Audit1)<br>audit-172.18.210.237</div><div class="wm" style="left:1209px;top:433px">audit审计01(Audit1)<br>audit-172.18.210.237</div><div class="wm" style="left:1509px;top:433px">audit审计01(Audit1)<br>audit-172.18.210.237</div><div class="wm" style="left:9px;top:733px">audit审计01(Audit1)<br>audit-172.18.210.237</div><div class="wm" style="left:309px;top:733px">audit审计01(Audit1)<br>audit-172.18.210.237</div><div class="wm" style="left:609px;top:733px">audit审计01(Audit1)<br>audit-172.18.210.237</div><div class="wm" style="left:909px;top:733px">audit审计01(Audit1)<br>audit-172.18.210.237</div><div class="wm" style="left:1209px;top:733px">audit审计01(Audit1)<br>audit-172.18.210.237</div><div class="wm" style="left:1509px;top:733px">audit审计01(Audit1)<br>audit-172.18.210.237</div>
</body></html>
